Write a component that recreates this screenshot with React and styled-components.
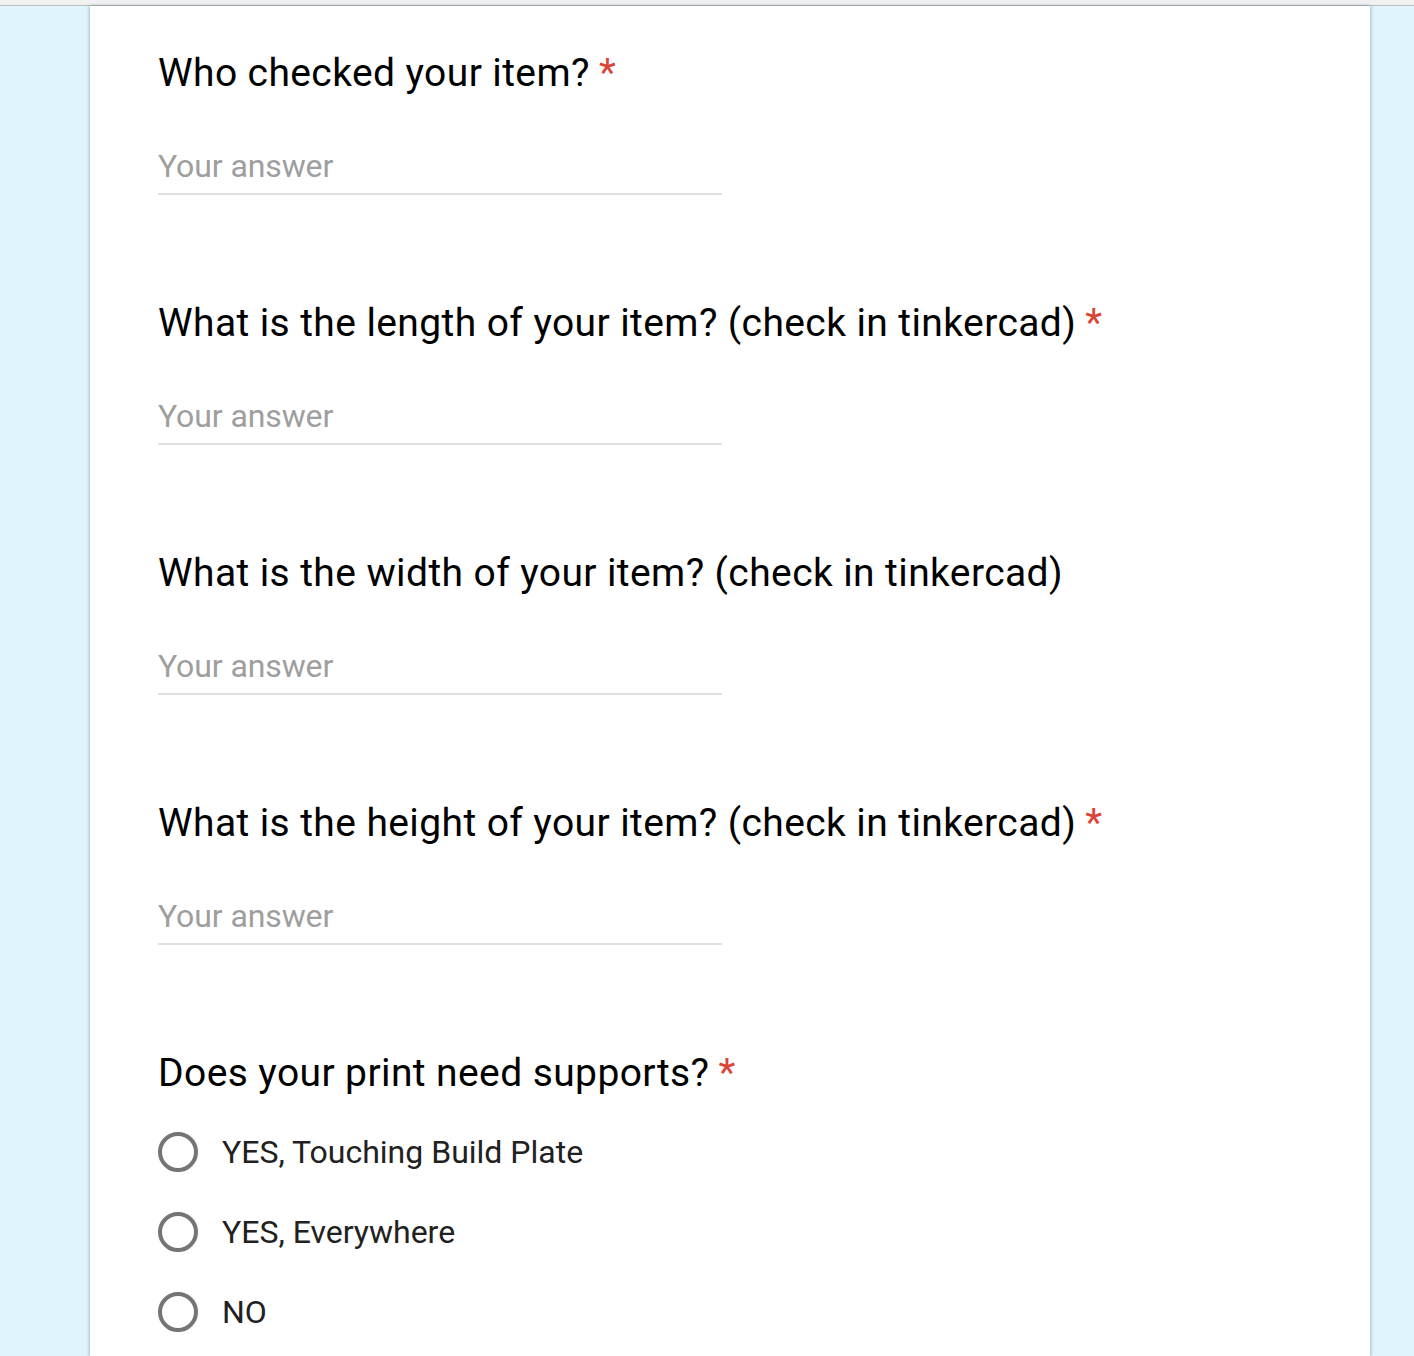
import React from "react";
import styled, { createGlobalStyle } from "styled-components";

const Global = createGlobalStyle`
  html, body { margin: 0; padding: 0; }
  body {
    background: #e0f4fd;
    font-family: Roboto, "Noto Sans", Arial, sans-serif;
    overflow: hidden;
  }
`;

const TopStrip = styled.div`
  height: 5px;
  background: #f1f1f1;
  border-bottom: 1px solid #bdbdbd;
`;

const Page = styled.div`
  display: flex;
  justify-content: flex-start;
  padding-left: 90px;
`;

const Card = styled.div`
  width: 1280px;
  min-height: 1350px;
  background: #fff;
  box-shadow: -1px 0 3px rgba(80, 110, 130, 0.35), 1px 0 3px rgba(80, 110, 130, 0.35);
  padding: 41px 0 0 68px;
  box-sizing: border-box;
`;

const Question = styled.div`
  display: flex;
  flex-direction: column;
  height: 250px;
`;

const Title = styled.div`
  font-size: 39px;
  letter-spacing: 0.4px;
  line-height: 52px;
  color: #000;
`;

const Star = styled.span`
  color: #db4437;
  margin-left: 9px;
`;

const Answer = styled.div`
  width: 564px;
  margin-top: 47px;
  border-bottom: 2px solid #e0e0e0;
  font-size: 32px;
  letter-spacing: -0.1px;
  color: #9e9e9e;
  line-height: 40px;
  padding-bottom: 7px;
`;

const Options = styled.div`
  display: flex;
  flex-direction: column;
  margin-top: 13px;
`;

const Option = styled.label`
  display: flex;
  align-items: center;
  height: 80px;
  gap: 24px;
  font-size: 32px;
  color: #212121;
`;

const Radio = styled.span`
  width: 32px;
  height: 32px;
  border: 4px solid #757575;
  border-radius: 50%;
  flex: none;
`;

const questions = [
  { title: "Who checked your item?", required: true },
  { title: "What is the length of your item? (check in tinkercad)", required: true },
  { title: "What is the width of your item? (check in tinkercad)", required: false },
  { title: "What is the height of your item? (check in tinkercad)", required: true },
];

export default function App() {
  return (
    <>
      <Global />
      <TopStrip />
      <Page>
        <Card>
          {questions.map((q) => (
            <Question key={q.title}>
              <Title>
                {q.title}
                {q.required && <Star>*</Star>}
              </Title>
              <Answer>Your answer</Answer>
            </Question>
          ))}
          <Question>
            <Title>
              Does your print need supports?<Star>*</Star>
            </Title>
            <Options>
              {["YES, Touching Build Plate", "YES, Everywhere", "NO"].map((o) => (
                <Option key={o}>
                  <Radio />
                  {o}
                </Option>
              ))}
            </Options>
          </Question>
        </Card>
      </Page>
    </>
  );
}
